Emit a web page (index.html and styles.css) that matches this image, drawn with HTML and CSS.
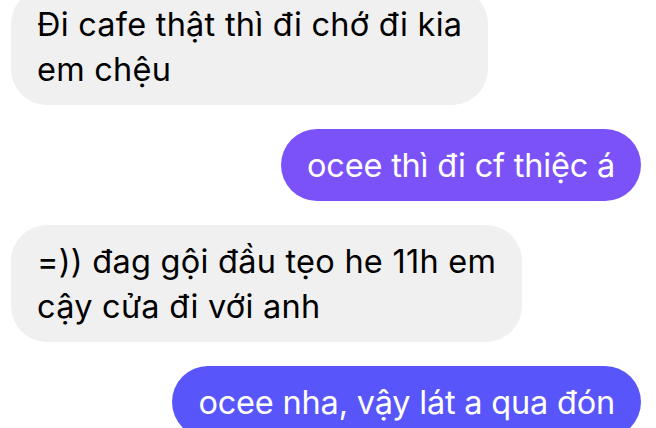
FILE: index.html
```html
<!DOCTYPE html>
<html lang="vi">
<head>
<meta charset="utf-8">
<link rel="stylesheet" href="styles.css">
</head>
<body>
<div class="chat">
  <div class="msg in"><div class="bubble">Đi cafe thật thì đi chớ đi kia<br>em chệu</div></div>
  <div class="msg out"><div class="bubble violet">ocee thì đi cf thiệc á</div></div>
  <div class="msg in"><div class="bubble">=)) đag gội đầu tẹo he 11h em<br>cậy cửa đi với anh</div></div>
  <div class="msg out"><div class="bubble blue">ocee nha, vậy lát a qua đón</div></div>
</div>
</body>
</html>
```
FILE: styles.css
```css
html, body {
  margin: 0;
  padding: 0;
  background: #ffffff;
  overflow: hidden;
}
.chat {
  width: 656px;
  margin-top: -12px;
  display: flex;
  flex-direction: column;
  gap: 24px;
  font-family: Inter, "Noto Sans", sans-serif;
  font-size: 32.5px;
  line-height: 45px;
  letter-spacing: -0.2px;
}
.msg {
  display: flex;
}
.msg.in {
  justify-content: flex-start;
  padding-left: 11px;
}
.msg.in .bubble {
  letter-spacing: 0.25px;
}
.msg.out {
  justify-content: flex-end;
  padding-right: 15px;
}
.bubble {
  white-space: nowrap;
  padding: 13.5px 26px;
  border-radius: 36px;
  background: #f0f0f0;
  color: #000;
}
.bubble.violet {
  background: #7a52f8;
  color: #fff;
}
.bubble.blue {
  background: #5856fa;
  color: #fff;
}
```
